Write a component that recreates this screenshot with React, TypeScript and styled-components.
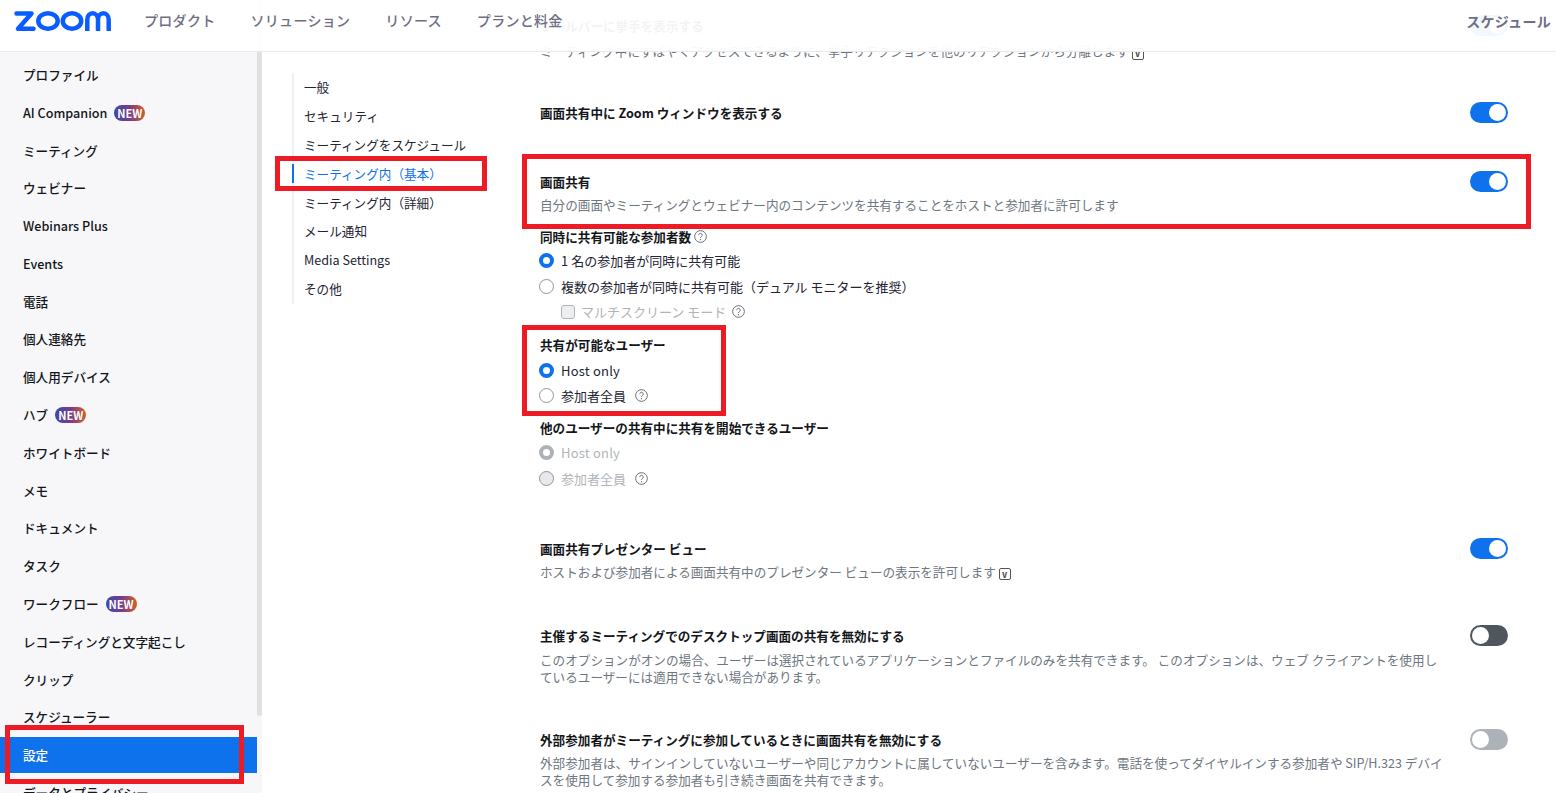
import styled, { createGlobalStyle } from "styled-components";

const GlobalStyle = createGlobalStyle`
  html, body {
    margin: 0;
    height: 100%;
    overflow: hidden;
    background: #fff;
  }
  body {
    font-family: "Noto Sans CJK JP", "Noto Sans", sans-serif;
    font-size: 12.6px;
    color: #131619;
  }
`;

const sideItems = [
  { label: "プロファイル", height: 38 },
  { label: "AI Companion", height: 38, isNew: true },
  { label: "ミーティング", height: 37 },
  { label: "ウェビナー", height: 38 },
  { label: "Webinars Plus", height: 38 },
  { label: "Events", height: 38 },
  { label: "電話", height: 37 },
  { label: "個人連絡先", height: 38 },
  { label: "個人用デバイス", height: 38 },
  { label: "ハブ", height: 38, isNew: true },
  { label: "ホワイトボード", height: 38 },
  { label: "メモ", height: 37 },
  { label: "ドキュメント", height: 38 },
  { label: "タスク", height: 38 },
  { label: "ワークフロー", height: 38, isNew: true },
  { label: "レコーディングと文字起こし", height: 38 },
  { label: "クリップ", height: 37 },
  { label: "スケジューラー", height: 38 },
  { label: "設定", height: 36, active: true },
  { label: "データとプライバシー", height: 38 },
];

const subItems = [
  "一般",
  "セキュリティ",
  "ミーティングをスケジュール",
  "ミーティング内（基本）",
  "ミーティング内（詳細）",
  "メール通知",
  "Media Settings",
  "その他",
];

const HelpIcon = ({ size = 13 }: { size?: number }) => (
  <HelpSvg width={size} height={size} viewBox="0 0 14 14" fill="none">
    <circle cx="7" cy="7" r="6.3" stroke="#5f6670" strokeWidth="1" />
    <path
      d="M5.100 5.500a1.900 1.900 0 1 1 2.900 1.600c-.7.4-1 .8-1 1.500"
      stroke="#5f6670"
      strokeWidth="1"
    />
    <circle cx="7" cy="10.400" r=".7" fill="#5f6670" />
  </HelpSvg>
);

const VBadge = () => <VBox>v</VBox>;

const ZoomLogo = () => (
  <svg width="100" height="24" viewBox="0 0 100 24" fill="none">
    <path
      d="M3.500 4.400H18.500L5 19.700H20.500"
      stroke="#0b5cff"
      strokeWidth="4.500"
      strokeLinejoin="round"
      strokeLinecap="round"
    />
    <ellipse cx="35" cy="12" rx="9.700" ry="7.800" stroke="#0b5cff" strokeWidth="4.500" />
    <ellipse cx="59" cy="12" rx="9.200" ry="7.800" stroke="#0b5cff" strokeWidth="4.500" />
    <path
      d="M74.300 22V10.500c0-3.500 2.400-6.200 5.400-6.200s5.300 2.700 5.300 6.200V22M85 10.500c0-3.500 2.400-6.200 5.400-6.200s5.300 2.700 5.300 6.200V22"
      stroke="#0b5cff"
      strokeWidth="4.500"
    />
  </svg>
);

export default function App() {
  return (
    <Page>
      <GlobalStyle />
      <Header>
        <LogoWrap>
          <ZoomLogo />
        </LogoWrap>
        <TopNav>
          <TopLink>プロダクト</TopLink>
          <TopLink>ソリューション</TopLink>
          <TopLink>リソース</TopLink>
          <TopLink>プランと料金</TopLink>
        </TopNav>
        <ScheduleLink>スケジュール</ScheduleLink>
      </Header>

      <Body>
        <Sidebar>
          <SideList>
            {sideItems.map((item) => (
              <SideItem key={item.label} $h={item.height} $active={item.active}>
                {item.label}
                {item.isNew && <NewBadge>NEW</NewBadge>}
              </SideItem>
            ))}
          </SideList>
          <ScrollThumb />
        </Sidebar>

        <SubNav>
          {subItems.map((item, i) => (
            <SubItem key={item} $active={i === 3}>
              {item}
            </SubItem>
          ))}
        </SubNav>

        <Content>
          <Section $top={0}>
            <SettingText $gap={7}>
              <Title>ツールバーに挙手を表示する</Title>
              <Desc>
                ミーティング中にすばやくアクセスできるように、挙手リアクションを他のリアクションから分離します <VBadge />
              </Desc>
            </SettingText>
            <Toggle $state="on" />
          </Section>

          <Section $top={44}>
            <Title>画面共有中に Zoom ウィンドウを表示する</Title>
            <Toggle $state="on" />
          </Section>

          <Section $top={50}>
            <SettingText>
              <Title>画面共有</Title>
              <Desc>自分の画面やミーティングとウェビナー内のコンテンツを共有することをホストと参加者に許可します</Desc>
            </SettingText>
            <Toggle $state="on" />
          </Section>

          <OptionGroup $top={13}>
            <GroupLabel $below={0.5}>
              同時に共有可能な参加者数 <HelpIcon />
            </GroupLabel>
            <Option>
              <Radio $state="on" />1 名の参加者が同時に共有可能
            </Option>
            <Option>
              <Radio />
              複数の参加者が同時に共有可能（デュアル モニターを推奨）
            </Option>
            <CheckRow>
              <CheckBox />
              <span>マルチスクリーン モード</span>
              <HelpIcon />
            </CheckRow>
          </OptionGroup>

          <OptionGroup $top={8.5}>
            <GroupLabel $below={2.5}>共有が可能なユーザー</GroupLabel>
            <Option>
              <Radio $state="on" />
              <LatinLabel>Host only</LatinLabel>
            </Option>
            <Option>
              <Radio />
              参加者全員 <SpacedHelp><HelpIcon /></SpacedHelp>
            </Option>
          </OptionGroup>

          <OptionGroup $top={7.5}>
            <GroupLabel $below={1}>他のユーザーの共有中に共有を開始できるユーザー</GroupLabel>
            <Option $disabled>
              <Radio $state="disabledOn" />
              <LatinLabel>Host only</LatinLabel>
            </Option>
            <Option $disabled>
              <Radio $state="disabled" />
              参加者全員 <SpacedHelp><HelpIcon /></SpacedHelp>
            </Option>
          </OptionGroup>

          <Section $top={48.5}>
            <SettingText>
              <Title>画面共有プレゼンター ビュー</Title>
              <Desc>
                ホストおよび参加者による画面共有中のプレゼンター ビューの表示を許可します <VBadge />
              </Desc>
            </SettingText>
            <Toggle $state="on" />
          </Section>

          <Section $top={47}>
            <SettingText $gap={6}>
              <Title>主催するミーティングでのデスクトップ画面の共有を無効にする</Title>
              <Desc>
                このオプションがオンの場合、ユーザーは選択されているアプリケーションとファイルのみを共有できます。 このオプションは、ウェブ クライアントを使用しているユーザーには適用できない場合があります。
              </Desc>
            </SettingText>
            <Toggle $state="off" />
          </Section>

          <Section $top={45.5}>
            <SettingText $gap={5}>
              <Title>外部参加者がミーティングに参加しているときに画面共有を無効にする</Title>
              <Desc>
                外部参加者は、サインインしていないユーザーや同じアカウントに属していないユーザーを含みます。電話を使ってダイヤルインする参加者や SIP/H.323 デバイスを使用して参加する参加者も引き続き画面を共有できます。
              </Desc>
            </SettingText>
            <Toggle $state="offLight" />
          </Section>
        </Content>
      </Body>

      <RedBox $x={5} $y={725} $w={239} $h={59} />
      <RedBox $x={275} $y={156} $w={212} $h={35} />
      <RedBox $x={522} $y={154} $w={1009} $h={75} />
      <RedBox $x={522} $y={325} $w={204} $h={91} />
    </Page>
  );
}

const Page = styled.div`
  position: relative;
  width: 1556px;
  height: 793px;
  overflow: hidden;
`;

const Header = styled.header`
  position: absolute;
  top: 0;
  left: 0;
  right: 0;
  z-index: 2;
  box-sizing: border-box;
  height: 52px;
  display: flex;
  align-items: center;
  padding: 0 5px 9px 0;
  background: rgba(255, 255, 255, 0.95);
  border-bottom: 1px solid #e9e9ec;
`;

const LogoWrap = styled.div`
  display: flex;
  margin: 0 0 1px 13px;
  width: 131px;
`;

const TopNav = styled.nav`
  display: flex;
  gap: 35px;
  margin-bottom: 3px;
`;

const TopLink = styled.span`
  font-size: 14px;
  font-weight: 500;
  color: #6e6e85;
  letter-spacing: 0.3px;
`;

const ScheduleLink = styled.span`
  margin: 0 0 0 auto;
  font-size: 14px;
  font-weight: 700;
  color: #6e6e85;
  letter-spacing: 0.3px;
`;

const Body = styled.div`
  display: flex;
  height: 793px;
`;

const Sidebar = styled.aside`
  position: relative;
  width: 262px;
  flex: none;
  background: #f7f7fa;
  overflow: hidden;
`;

const SideList = styled.ul`
  list-style: none;
  margin: 0;
  padding: 55.8px 5px 0 0;
`;

const SideItem = styled.li<{ $h: number; $active?: boolean }>`
  height: ${(p) => p.$h}px;
  margin: ${(p) => (p.$active ? "1.2px 0 0.8px" : "0")};
  display: flex;
  align-items: center;
  gap: 7px;
  padding-left: 23px;
  font-weight: 500;
  color: ${(p) => (p.$active ? "#fff" : "#131619")};
  background: ${(p) => (p.$active ? "#0e72ed" : "transparent")};
`;

const NewBadge = styled.span`
  display: inline-flex;
  align-items: center;
  justify-content: center;
  width: 31px;
  height: 16px;
  margin-top: 1px;
  border-radius: 8px;
  font-size: 11px;
  font-weight: 700;
  color: #fff;
  background: linear-gradient(90deg, #3b4aa8 0%, #7a3b8f 50%, #d2611f 100%);
`;

const ScrollThumb = styled.div`
  position: absolute;
  top: 0;
  right: 0;
  width: 5px;
  height: 716px;
  background: #e0e0e0;
  border-radius: 0 0 3px 3px;
`;

const SubNav = styled.nav`
  align-self: flex-start;
  flex: none;
  width: 200px;
  margin: 72.5px 0 0 30px;
  border-left: 2px solid #edf0f4;
  padding-bottom: 1px;
`;

const SubItem = styled.div<{ $active?: boolean }>`
  position: relative;
  height: 28.8px;
  display: flex;
  align-items: center;
  padding-left: 10px;
  color: ${(p) => (p.$active ? "#0e72ed" : "#232333")};
  ${(p) =>
    p.$active &&
    `&::before {
      content: "";
      position: absolute;
      left: -2px;
      top: 5px;
      bottom: 5px;
      width: 2px;
      background: #0e72ed;
    }`}
`;

const Content = styled.main`
  flex: none;
  width: 968px;
  margin-left: 46px;
  padding-top: 17px;
`;

const SettingText = styled.div<{ $gap?: number }>`
  display: flex;
  flex-direction: column;
  gap: ${(p) => p.$gap ?? 5}px;
  width: 904px;
`;

const Section = styled.section<{ $top: number }>`
  display: flex;
  justify-content: space-between;
  align-items: flex-start;
  margin-top: ${(p) => p.$top}px;
`;

const Title = styled.div`
  font-weight: 700;
  line-height: 18px;
  color: #131619;
`;

const Desc = styled.div`
  line-height: 17.2px;
  color: #6e7680;
`;

const VBox = styled.span`
  display: inline-flex;
  align-items: center;
  justify-content: center;
  width: 10px;
  height: 10px;
  border: 1px solid #555;
  border-radius: 2px;
  font-size: 9px;
  line-height: 1;
  font-weight: 700;
  color: #444;
  vertical-align: -1px;
`;

const Toggle = styled.span<{ $state: "on" | "off" | "offLight" }>`
  position: relative;
  flex: none;
  width: 38px;
  height: 21px;
  border-radius: 11px;
  margin-top: -2px;
  background: ${(p) =>
    p.$state === "on" ? "#0e72ed" : p.$state === "off" ? "#4f565e" : "#adb2b8"};
  &::after {
    content: "";
    position: absolute;
    top: 2px;
    left: ${(p) => (p.$state === "on" ? "19px" : "2px")};
    width: 17px;
    height: 17px;
    border-radius: 50%;
    background: #fff;
  }
`;

const OptionGroup = styled.div<{ $top: number }>`
  display: flex;
  flex-direction: column;
  margin-top: ${(p) => p.$top}px;
`;

const GroupLabel = styled.div<{ $below?: number }>`
  display: flex;
  align-items: center;
  gap: 3px;
  height: 22px;
  margin-bottom: ${(p) => p.$below ?? 0}px;
  font-weight: 700;
  color: #131619;
`;

const Option = styled.div<{ $disabled?: boolean }>`
  display: flex;
  align-items: center;
  height: ${(p) => (p.$disabled ? "26px" : "25.5px")};
  font-size: 13px;
  color: ${(p) => (p.$disabled ? "#b0b4b9" : "#232333")};
`;

const LatinLabel = styled.span`
  letter-spacing: 0.2px;
`;

const Radio = styled.span<{ $state?: "on" | "disabledOn" | "disabled" }>`
  flex: none;
  box-sizing: border-box;
  width: 15px;
  height: 15px;
  margin: 0 7px 0 -1px;
  border-radius: 50%;
  background: ${(p) => (p.$state === "disabled" ? "#e8e9ec" : "#fff")};
  border: ${(p) =>
    p.$state === "on"
      ? "4px solid #0e72ed"
      : p.$state === "disabledOn"
        ? "4px solid #adb2b8"
        : "1px solid #8f949b"};
`;

const CheckRow = styled.div`
  display: flex;
  align-items: center;
  height: 25.5px;
  padding-left: 21px;
  font-size: 13px;
  color: #b0b4b9;
  gap: 6px;
`;

const CheckBox = styled.span`
  box-sizing: border-box;
  width: 14px;
  height: 14px;
  border-radius: 3px;
  border: 1px solid #b0b4b9;
  background: #eceef0;
`;

const HelpSvg = styled.svg`
  flex: none;
`;

const SpacedHelp = styled.span`
  display: inline-flex;
  margin-left: 9px;
`;

const RedBox = styled.div<{ $x: number; $y: number; $w: number; $h: number }>`
  position: absolute;
  z-index: 3;
  box-sizing: border-box;
  left: ${(p) => p.$x}px;
  top: ${(p) => p.$y}px;
  width: ${(p) => p.$w}px;
  height: ${(p) => p.$h}px;
  border: 5px solid #ed1c24;
  pointer-events: none;
`;
